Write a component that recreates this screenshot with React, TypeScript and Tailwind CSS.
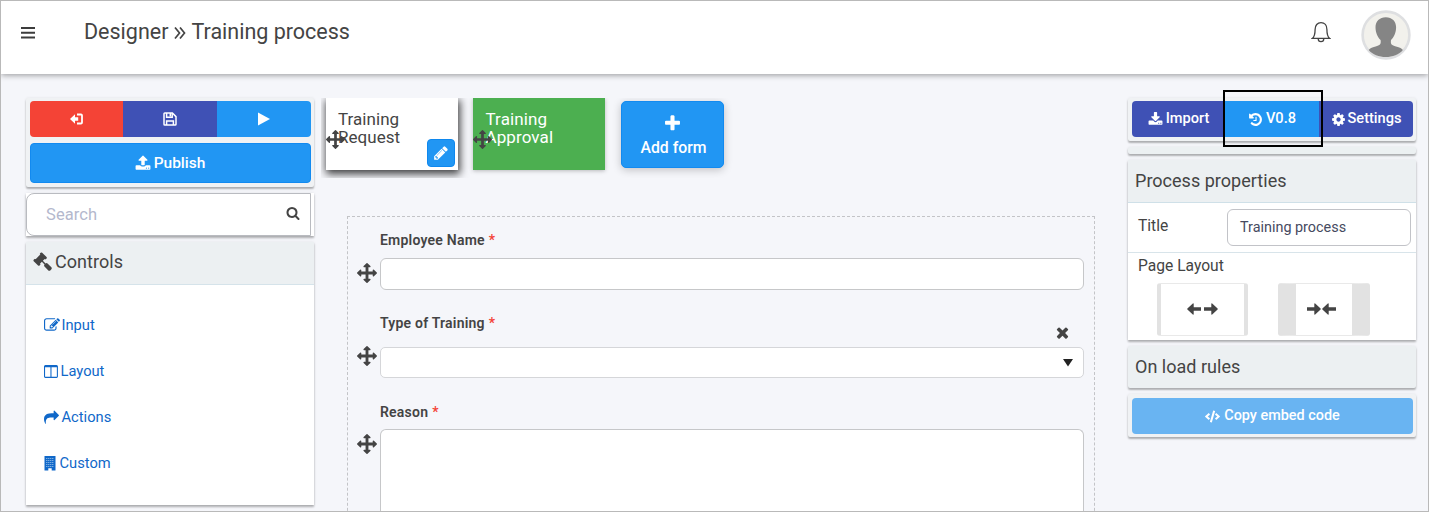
import React from "react";
import { FaCode } from "react-icons/fa";

const paths = {
  gavel:
    "M1771 1536q0 53-37 90l-107 108q-39 37-91 37-53 0-90-37l-363-364q-38-36-38-90 0-53 43-96l-256-256-126 126q-14 14-34 14t-34-14q2 2 12.5 12t12.5 13 10 11.5 10 13.5 6 13.5 5.5 16.5 1.5 18q0 38-28 68-3 3-16.5 18t-19 20.5-18.5 16.5-22 15.5-22 9-26 4.5q-40 0-68-28l-408-408q-28-28-28-68 0-13 4.5-26t9-22 15.5-22 16.5-18.5 20.5-19 18-16.5q30-28 68-28 10 0 18 1.5t16.5 5.5 13.5 6 13.5 10 11.5 10 13 12.5 12 12.5q-14-14-14-34t14-34l348-348q14-14 34-14t34 14q-2-2-12.5-12t-12.5-13-10-11.5-10-13.5-6-13.5-5.5-16.5-1.5-18q0-38 28-68 3-3 16.5-18t19-20.5 18.5-16.5 22-15.5 22-9 26-4.5q40 0 68 28l408 408q28 28 28 68 0 13-4.5 26t-9 22-15.5 22-16.5 18.5-20.5 19-18 16.5q-30 28-68 28-10 0-18-1.5t-16.5-5.5-13.5-6-13.5-10-11.5-10-13-12.5-12-12.5q14 14 14 34t-14 34l-126 126 256 256q43-43 96-43 52 0 91 37l363 363q37 39 37 91z",
  move: "M1792 896q0 26-19 45l-256 256q-19 19-45 19t-45-19-19-45v-128h-384v384h128q26 0 45 19t19 45-19 45l-256 256q-19 19-45 19t-45-19l-256-256q-19-19-19-45t19-45 45-19h128v-384h-384v128q0 26-19 45t-45 19-45-19l-256-256q-19-19-19-45t19-45l256-256q19-19 45-19t45 19 19 45v128h384v-384h-128q-26 0-45-19t-19-45 19-45l256-256q19-19 45-19t45 19l256 256q19 19 19 45t-19 45-45 19h-128v384h384v-128q0-26 19-45t45-19 45 19l256 256q19 19 19 45z",
  cog: "M1152 896q0-106-75-181t-181-75-181 75-75 181 75 181 181 75 181-75 75-181zm512-109v222q0 12-8 23t-20 13l-185 28q-19 54-39 91 35 50 107 138 10 12 10 25t-9 23q-27 37-99 108t-94 71q-12 0-26-9l-138-108q-44 23-91 38-16 136-29 186-7 28-36 28h-222q-14 0-24.5-8.5t-11.5-21.5l-28-184q-49-16-90-37l-141 107q-10 9-25 9-14 0-25-11-126-114-165-168-7-10-7-23 0-12 8-23 15-21 51-66.5t54-70.5q-27-50-41-99l-183-27q-13-2-21-12.5t-8-23.5v-222q0-12 8-23t19-13l186-28q14-46 39-92-40-57-107-138-10-12-10-24 0-10 9-23 26-36 98.5-107.5t94.5-71.5q13 0 26 10l138 107q44-23 91-38 16-136 29-186 7-28 36-28h222q14 0 24.5 8.5t11.5 21.5l28 184q49 16 90 37l142-107q9-9 24-9 13 0 25 10 129 119 165 170 7 8 7 22 0 12-8 23-15 21-51 66.5t-54 70.5q26 50 41 98l183 28q13 2 21 12.5t8 23.5z",
  history:
    "M1664 896q0 156-61 298t-164 245-245 164-298 61q-172 0-327-72.5t-264-204.5q-7-10-6.5-22.5t8.5-20.5l137-138q10-9 25-9 16 2 23 12 73 95 179 147t225 52q104 0 198.5-40.5t163.5-109.5 109.5-163.5 40.5-198.5-40.5-198.5-109.5-163.5-163.5-109.5-198.5-40.5q-98 0-188 35.5t-160 101.5l137 138q31 30 14 69-17 40-59 40h-448q-26 0-45-19t-19-45v-448q0-42 40-59 39-17 69 14l130 129q107-101 244.5-156.5t284.5-55.5q156 0 298 61t245 164 164 245 61 298zm-640-288v448q0 14-9 23t-23 9h-320q-14 0-23-9t-9-23v-64q0-14 9-23t23-9h224v-352q0-14 9-23t23-9h64q14 0 23 9t9 23z",
  download:
    "M1344 1344q0-26-19-45t-45-19-45 19-19 45 19 45 45 19 45-19 19-45zm256 0q0-26-19-45t-45-19-45 19-19 45 19 45 45 19 45-19 19-45zm128-224v320q0 40-28 68t-68 28h-1472q-40 0-68-28t-28-68v-320q0-40 28-68t68-28h465l135 136q58 56 136 56t136-56l136-136h464q40 0 68 28t28 68zm-325-569q17 41-14 70l-448 448q-18 19-45 19t-45-19l-448-448q-31-29-14-70 17-39 59-39h256v-448q0-26 19-45t45-19h256q26 0 45 19t19 45v448h256q42 0 59 39z",
  upload:
    "M1344 1472q0-26-19-45t-45-19-45 19-19 45 19 45 45 19 45-19 19-45zm256 0q0-26-19-45t-45-19-45 19-19 45 19 45 45 19 45-19 19-45zm128-224v320q0 40-28 68t-68 28h-1472q-40 0-68-28t-28-68v-320q0-40 28-68t68-28h427q21 56 70.5 92t110.5 36h256q61 0 110.5-36t70.5-92h427q40 0 68 28t28 68zm-325-648q-17 40-59 40h-256v448q0 26-19 45t-45 19h-256q-26 0-45-19t-19-45v-448h-256q-42 0-59-40-17-39 14-69l448-448q18-19 45-19t45 19l448 448q31 30 14 69z",
  search:
    "M1216 832q0-185-131.5-316.5t-316.5-131.5-316.5 131.5-131.5 316.5 131.5 316.5 316.5 131.5 316.5-131.5 131.5-316.5zm512 832q0 52-38 90t-90 38q-54 0-90-38l-343-342q-179 124-399 124-143 0-273.5-55.5t-225-150-150-225-55.5-273.5 55.5-273.5 150-225 225-150 273.5-55.5 273.5 55.5 225 150 150 225 55.5 273.5q0 220-124 399l343 343q37 37 37 90z",
  plus: "M1600 736v192q0 40-28 68t-68 28h-416v416q0 40-28 68t-68 28h-192q-40 0-68-28t-28-68v-416h-416q-40 0-68-28t-28-68v-192q0-40 28-68t68-28h416v-416q0-40 28-68t68-28h192q40 0 68 28t28 68v416h416q40 0 68 28t28 68z",
  times:
    "M1490 1322q0 40-28 68l-136 136q-28 28-68 28t-68-28l-294-294-294 294q-28 28-68 28t-68-28l-136-136q-28-28-28-68t28-68l294-294-294-294q-28-28-28-68t28-68l136-136q28-28 68-28t68 28l294 294 294-294q28-28 68-28t68 28l136 136q28 28 28 68t-28 68l-294 294 294 294q28 28 28 68z",
  pencil:
    "M491 1536l91-91-235-235-91 91v107h128v128h107zm523-928q0-22-22-22-10 0-17 7l-542 542q-7 7-7 17 0 22 22 22 10 0 17-7l542-542q7-7 7-17zm-54-192l416 416-832 832h-416v-416zm683 96q0 53-37 90l-166 166-416-416 166-165q36-38 90-38 53 0 91 38l235 234q37 39 37 91z",
  edit: "M888 1184l116-116-152-152-116 116v56h96v96h56zm440-720q-16-16-33 1l-350 350q-17 17-1 33t33-1l350-350q17-17 1-33zm80 594v190q0 119-84.5 203.5t-203.5 84.5h-832q-119 0-203.5-84.5t-84.5-203.5v-832q0-119 84.5-203.5t203.5-84.5h832q63 0 117 25 15 7 18 23 3 17-9 29l-49 49q-14 14-32 8-23-6-45-6h-832q-66 0-113 47t-47 113v832q0 66 47 113t113 47h832q66 0 113-47t47-113v-126q0-13 9-22l64-64q15-15 35-7t20 29zm-96-738l288 288-672 672h-288v-288zm444 132l-92 92-288-288 92-92q28-28 68-28t68 28l152 152q28 28 28 68t-28 68z",
  columns:
    "M160 1536h608v-1152h-640v1120q0 13 9.5 22.5t22.5 9.5zm1376-32v-1120h-640v1152h608q13 0 22.5-9.5t9.5-22.5zm128-1216v1216q0 66-47 113t-113 47h-1344q-66 0-113-47t-47-113v-1216q0-66 47-113t113-47h1344q66 0 113 47t47 113z",
  share:
    "M1792 640q0 26-19 45l-512 512q-19 19-45 19t-45-19-19-45v-256h-224q-98 0-175.5 6t-154 21.5-133 42.5-105.5 69.5-80 101-48.5 138.5-17.5 181q0 55 5 123 0 6 2.5 23.5t2.5 26.5q0 15-8.5 25t-23.5 10q-16 0-28-17-7-9-13-22t-13.5-30-10.5-24q-127-285-127-451 0-199 53-333 162-403 875-403h224v-256q0-26 19-45t45-19 45 19l512 512q19 19 19 45z",
};

function Icon({ name, className }: { name: keyof typeof paths; className: string }) {
  return (
    <svg viewBox="0 0 1792 1792" fill="currentColor" className={`shrink-0 ${className}`}>
      <path d={paths[name]} />
    </svg>
  );
}

const cardShadow = "shadow-[0_2px_2px_rgba(0,0,0,0.28),0_0_3px_rgba(0,0,0,0.08)]";

function Building() {
  const xs = [2.5, 4.5, 6.5, 8.5];
  const ys = [2, 4, 6, 8, 10];
  return (
    <svg viewBox="0 0 12 15" className="h-[15px] w-3 shrink-0">
      <path d="M0.5 0h11v14.5H7.7v-2.2H4.3v2.2H0.5z" fill="currentColor" />
      {ys.map((y) => xs.map((x) => <rect key={`${x}-${y}`} x={x - 0.2} y={y} width="1" height="1" fill="#a9cbed" />))}
    </svg>
  );
}

function Arrow({ flip = false }: { flip?: boolean }) {
  return (
    <svg viewBox="0 0 14 12" className={flip ? "h-3 w-3.5 -scale-x-100" : "h-3 w-3.5"}>
      <path d="M0 4.3h7.3V0.8Q7.5 0 8.2 0.6L13.6 5.5Q14 6 13.6 6.5L8.2 11.4Q7.5 12 7.3 11.2V7.7H0z" fill="#444" />
    </svg>
  );
}

function Header() {
  return (
    <header className="relative z-10 flex h-[73px] shrink-0 bg-white pl-5 shadow-[0_1px_6px_rgba(0,0,0,0.4)]">
      <svg viewBox="0 0 14 12" className="mt-[26px] h-3 w-3.5">
        <path d="M0 1h14M0 5.7h14M0 10.5h14" stroke="#3c3c3c" strokeWidth="2" />
      </svg>
      <h1 className="ml-[49px] mt-[17px] flex h-7 items-center whitespace-nowrap text-[21.500px] leading-7 text-[#444]">
        Designer
        <svg viewBox="0 0 12 12" className="mx-[5.500px] mt-px h-3 w-3" fill="none" stroke="#444" strokeWidth="1.700">
          <path d="M1 0.500 5.500 6 1 11.500M6 0.500 10.500 6 6 11.500" />
        </svg>
        Training process
      </h1>
      <svg viewBox="0 0 20 22" className="ml-auto mr-[30px] mt-5 h-[22px] w-5" fill="none" stroke="#444" strokeWidth="1.300">
        <path d="M1.300 17.400c2.400-1.800 2.800-3.600 2.800-9C4.100 4.500 6.400 1.600 10 1.600s5.900 2.900 5.900 6.800c0 5.400 0.400 7.200 2.800 9z" />
        <path d="M7.200 17.500a2.800 3.200 0 0 0 5.600 0" />
      </svg>
      <svg viewBox="0 0 50 50" className="mr-[17px] mt-[9px] h-[50px] w-[50px]">
        <circle cx="25" cy="25" r="23.400" fill="#f2f1ec" stroke="#dedfe1" strokeWidth="2.600" />
        <path
          d="M24.800 7.200c-6.300 0-10.300 4.200-10.300 10.100 0 5.500 2.300 10.400 5.100 12.700.6 4.500-.7 5.400-5 6.400-3.800.9-6 2-6.900 3.700 4 4.800 10.200 7 17.100 7s13.200-2.300 17.100-7c-.9-1.700-3.100-2.900-6.900-3.700-4.300-1-5.600-1.900-5-6.400 2.800-2.300 5.100-7.200 5.100-12.700 0-5.900-4-10.100-10.300-10.100z"
          fill="#858585"
        />
      </svg>
    </header>
  );
}

function LeftColumn() {
  const links = [
    { label: "Input", icon: <Icon name="edit" className="h-4 w-4" />, gap: "gap-[2px]" },
    { label: "Layout", icon: <Icon name="columns" className="h-[15px] w-[15px]" />, gap: "gap-[2px]" },
    { label: "Actions", icon: <Icon name="share" className="h-[15px] w-[15px]" />, gap: "gap-[3px]" },
    { label: "Custom", icon: <Building />, gap: "gap-1" },
  ];
  return (
    <aside className="ml-[25px] mt-6 w-72 shrink-0 text-[#444]">
      <div className={`h-[89px] rounded-[2px] bg-[#f0f2f4] pl-[3.500px] pr-[3.500px] pt-[3px] text-white ${cardShadow}`}>
        <div className="flex h-9 overflow-hidden rounded">
          <button className="flex flex-1 items-center justify-center bg-[#f44336]">
            <svg viewBox="0 0 13 12" className="h-3 w-[13px]">
              <path d="M0 6 5 1.300V4.200H8.200V7.800H5V10.700z" fill="currentColor" />
              <path d="M7 1.500h4a1 1 0 0 1 1 1v7a1 1 0 0 1-1 1H7" fill="none" stroke="currentColor" strokeWidth="1.800" />
            </svg>
          </button>
          <button className="flex flex-1 items-center justify-center bg-[#3f51b5]">
            <svg viewBox="0 0 14 14" className="-mt-px h-3.5 w-3.5" fill="none" stroke="currentColor" strokeWidth="1.500">
              <path d="M1.800 1h7.600L13 4.600v7.600a.8.8 0 0 1-.8.8H1.800a.8.8 0 0 1-.8-.8V1.800A.8.8 0 0 1 1.800 1z" />
              <path d="M3.600 13V9h6.800v4M3.600 1v4.200h5.600V1" />
              <path d="M7.300 1v3.500" />
            </svg>
          </button>
          <button className="flex flex-1 items-center justify-center bg-[#2196f3]">
            <svg viewBox="0 0 12 14" className="-mt-px h-3.5 w-3">
              <path d="M0 0.500 12 7 0 13.500z" fill="currentColor" />
            </svg>
          </button>
        </div>
        <button className="mt-1.5 flex h-10 w-full items-center justify-center gap-[3px] rounded border border-[#128af0] bg-[#2196f3] text-[15.500px] font-medium leading-5">
          <Icon name="upload" className="h-4 w-4" />
          Publish
        </button>
      </div>
      <div className={`mt-1.5 h-[43px] bg-white pr-[3px] ${cardShadow}`}>
        <div className="flex h-[43px] items-center rounded-l-lg border border-[#b9bbc0] pl-[19px] pr-[10px]">
          <span className="pt-px text-[16.500px] tracking-[0.100px] text-[#b4b8cd]">Search</span>
          <Icon name="search" className="-mt-[4px] ml-auto h-3.5 w-3.5" />
        </div>
      </div>
      <section className={`mt-1.5 h-[263px] bg-white ${cardShadow}`}>
        <h2 className="flex h-[43px] items-center gap-[3px] border-b border-[#d5e3ea] bg-[#ecf0f2] pb-1 pl-[7px] text-[18px] tracking-[0.050px]">
          <Icon name="gavel" className="h-[19px] w-[19px]" />
          Controls
        </h2>
        <ul className="pl-[17.500px] pt-[17px] text-[#1068c9]">
          {links.map((l) => (
            <li key={l.label} className={`flex h-[46px] items-center text-[14.700px] ${l.gap}`}>
              {l.icon}
              {l.label}
            </li>
          ))}
        </ul>
      </section>
    </aside>
  );
}

function FieldLabel({ children }: { children: React.ReactNode }) {
  return (
    <div className="flex h-5 items-center gap-1 pl-[23px] text-[14px] font-semibold tracking-[0.220px] text-[#444]">
      {children}
      <span className="text-[#f44336]">*</span>
    </div>
  );
}

function Center() {
  return (
    <main className="ml-[7px] flex h-[437px] w-[775px] shrink-0 flex-col overflow-hidden pt-6">
      <div className="flex h-[80px] shrink-0 overflow-hidden pl-[5px] text-[17px] leading-[18.500px]">
        <div className="relative h-[72px] w-[132px] bg-white pl-3 pt-[11.500px] tracking-[0.050px] text-[#444] shadow-[1px_3px_8px_1px_rgba(0,0,0,0.75)]">
          Training
          <br />
          Request
          <Icon name="move" className="absolute left-0 top-8 h-[19px] w-[19px]" />
          <button className="absolute bottom-[3px] right-[3px] flex h-[28px] w-7 items-center justify-center rounded border border-[#0f88ee] bg-[#2196f3] text-white">
            <Icon name="pencil" className="h-4 w-4" />
          </button>
        </div>
        <div className="relative ml-[15px] h-[72px] w-[132px] bg-[#4caf50] pl-[12.500px] pt-[11.500px] tracking-[0.100px] text-white shadow-[0_1px_4px_rgba(0,0,0,0.25)]">
          Training
          <br />
          Approval
          <Icon name="move" className="absolute left-0 top-8 h-[19px] w-[19px] text-[#444]" />
        </div>
        <button className="ml-4 mt-[3px] flex h-[67px] w-[103px] flex-col items-center rounded-[5px] border border-[#128af0] bg-[#2196f3] pt-3 text-[15.800px] font-medium text-white shadow-[0_2px_8px_rgba(0,0,0,0.22)]">
          <Icon name="plus" className="h-[19px] w-[19px]" />
          <span className="ml-[2px] mt-[6px]">Add form</span>
        </button>
      </div>
      <div className="ml-[26px] mt-[38px] h-[320px] w-[748px] shrink-0 border border-dashed border-[#c3c4c7] pl-[9px] pr-[10px] pt-[13px] text-[#444]">
        <FieldLabel>Employee Name</FieldLabel>
        <div className="mt-2 flex h-8 gap-[3px]">
          <Icon name="move" className="mt-[5px] h-5 w-5" />
          <div className="flex-1 rounded-md border border-[#c6c7c9] bg-white" />
        </div>
        <div className="mt-[23px] flex h-[21px]">
          <FieldLabel>Type of Training</FieldLabel>
          <Icon name="times" className="ml-auto mr-[13px] mt-[10.500px] h-[17px] w-[17px]" />
        </div>
        <div className="mt-[13px] flex h-[31px] gap-[3px]">
          <Icon name="move" className="-mt-px h-5 w-5" />
          <div className="flex flex-1 items-center justify-end rounded-[5px] border border-[#d5d6d9] bg-white pr-[10px]">
            <svg viewBox="0 0 10 8" className="h-2 w-2.5">
              <path d="M0 0h10L5 7.500z" fill="#222" />
            </svg>
          </div>
        </div>
        <div className="mt-[24px]">
          <FieldLabel>Reason</FieldLabel>
        </div>
        <div className="mt-[7px] flex h-[100px] gap-[3px]">
          <Icon name="move" className="mt-[5px] h-5 w-5" />
          <div className="flex-1 rounded-t-md border border-b-0 border-[#c6c7c9] bg-white" />
        </div>
      </div>
    </main>
  );
}

function RightColumn() {
  return (
    <aside className="ml-8 mt-6 w-72 shrink-0 text-[#444]">
      <div className={`h-[43px] rounded-[2px] bg-[#f0f2f4] pl-[4px] pr-[3px] pt-[3px] ${cardShadow}`}>
        <div className="relative flex h-9 text-[14.600px] font-medium text-white">
          <button className="flex w-[93px] items-center justify-center gap-[3px] rounded-l bg-[#3f51b5]">
            <Icon name="download" className="h-[15px] w-[15px]" />
            Import
          </button>
          <button className="flex w-[94px] items-center justify-center gap-[3px] bg-[#2196f3]">
            <Icon name="history" className="h-[15px] w-[15px]" />
            V0.8
          </button>
          <button className="flex w-[94px] items-center justify-center gap-[2px] rounded-r bg-[#3f51b5]">
            <Icon name="cog" className="h-[15px] w-[15px]" />
            Settings
          </button>
          <div className="absolute -top-[11px] left-[91px] z-10 h-[57px] w-[100px] border-2 border-black" />
        </div>
      </div>
      <div className={`mt-[6px] h-[7px] rounded-[2px] bg-[#ecf0f2] ${cardShadow}`} />
      <section className={`mt-[6px] h-[180px] bg-white ${cardShadow}`}>
        <h2 className="flex h-[43px] items-center border-b border-[#cfe0e8] bg-[#ecf0f2] pl-[7px] text-[18px] leading-6 tracking-[0.020px]">
          Process properties
        </h2>
        <div className="flex h-[50px] justify-between border-b border-[#d8e4ea] pl-[10px] pr-[5px] pt-[6px] text-[15.600px]">
          <span className="mt-[5px] leading-6">Title</span>
          <span className="flex h-[37px] w-[184px] items-center rounded-md border border-[#c2c3c8] pl-3 text-[14.400px] text-[#464a60]">
            Training process
          </span>
        </div>
        <div className="pl-[10px] pt-px text-[15.600px] leading-6">Page Layout</div>
        <div className="flex gap-[30px] pl-[29px] pt-[5px]">
          <div className="flex h-[53px] w-[91px] items-center justify-center gap-[3px] rounded-[3px] border border-x-4 border-[#e9e9e9] border-x-[#e2e2e2] bg-white pb-px">
            <Arrow flip />
            <Arrow />
          </div>
          <div className="flex h-[53px] w-[92px] items-center justify-center gap-px rounded-[3px] border border-x-[18px] border-[#e9e9e9] border-x-[#e2e2e2] bg-white pb-px pr-[5px]">
            <Arrow />
            <Arrow flip />
          </div>
        </div>
      </section>
      <h2 className={`mt-[6px] flex h-[42px] items-center rounded-[2px] bg-[#ecf0f2] pb-[2px] pl-[7px] text-[18px] tracking-[0.020px] ${cardShadow}`}>
        On load rules
      </h2>
      <div className={`mt-[6px] h-[43px] rounded-[2px] bg-[#f0f2f4] pl-[4px] pr-[3px] pt-[4px] ${cardShadow}`}>
        <button className="flex h-9 w-full items-center justify-center gap-[4px] rounded bg-[#69b4f2] text-[14.400px] font-medium text-white">
          <FaCode className="h-[13px] w-[15px]" />
          Copy embed code
        </button>
      </div>
    </aside>
  );
}

export default function App() {
  return (
    <div className="flex h-[512px] w-[1429px] flex-col overflow-hidden border border-[#b9b9b9] bg-[#f5f6fa] font-['Roboto',sans-serif]">
      <Header />
      <div className="flex h-[437px]">
        <LeftColumn />
        <Center />
        <RightColumn />
      </div>
    </div>
  );
}
